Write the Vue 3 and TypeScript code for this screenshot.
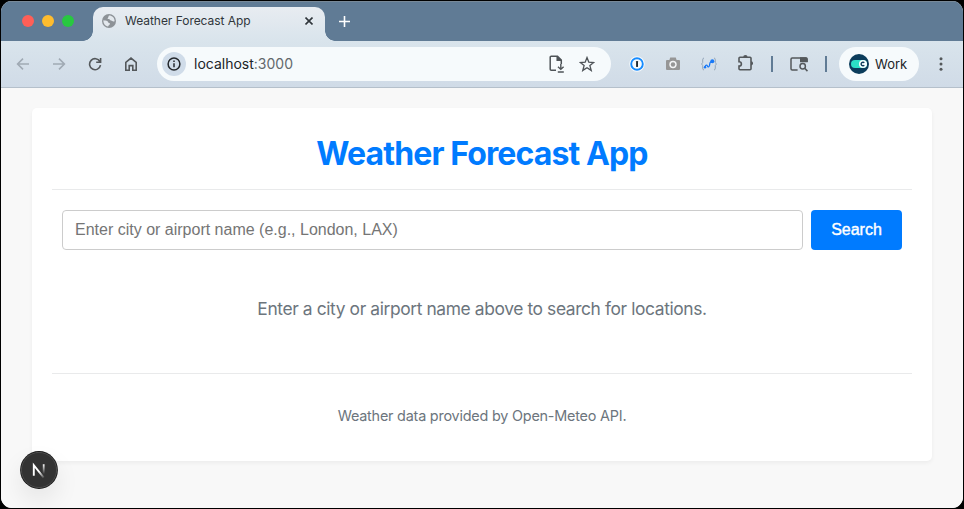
<script setup lang="ts">
import { ref } from 'vue'

const query = ref<string>('')
const lights: string[] = ['red', 'yellow', 'green']
</script>

<template>
  <div class="desktop">
    <div class="window">
      <div class="tabstrip">
        <div class="lights">
          <span v-for="c in lights" :key="c" class="light" :class="c"></span>
        </div>
        <div class="tab">
          <svg class="globe" width="14" height="14" viewBox="0 0 14 14">
            <circle cx="7" cy="7" r="7" fill="#8d9297" />
            <path d="M1.400 6.200C2.800 6.500 4.200 6.300 5.500 7.200c1 .6.3 1.600 1.600 1.900 1.100.3 1.200 1 .3 1.600-.8.5-.9 1.100-1.300 1.700C3.200 12 1.200 9.500 1.400 6.200z" fill="#e3e8ed" />
            <path d="M7 1.500c-.9 1-.2 1.500-1 2.300-.8.700-.3 1.300.8 1.300 1.200 0 1 1.300 2.200 1.500 1.200.2 1.300 1 2.400 1 .7 0 1-.3 1.200-.7C12.400 3.900 10.500 1.500 7 1.500z" fill="#e3e8ed" />
          </svg>
          <span class="tab-title">Weather Forecast App</span>
          <svg class="close" width="8" height="8" viewBox="0 0 8 8"><path d="M.5.5l7 7M7.500.5l-7 7" stroke="#30363b" stroke-width="1.600" /></svg>
        </div>
        <svg class="plus" width="11" height="11" viewBox="0 0 11 11"><path d="M5.500 0v11M0 5.500h11" stroke="#fff" stroke-width="1.600" /></svg>
      </div>

      <div class="toolbar">
        <div class="nav">
          <svg width="14" height="14" viewBox="0 0 14 14" class="line dim"><path d="M13 7H1.800M7 1.600L1.600 7 7 12.400" /></svg>
          <svg width="14" height="14" viewBox="0 0 14 14" class="line dim"><path d="M1 7h11.200M7 1.600L12.400 7 7 12.400" /></svg>
          <svg width="14" height="14" viewBox="0 0 14 14" class="line"><path d="M11.900 4.500A5.500 5.500 0 1 0 12.500 8.200M12.600 1v4.300H8.200" /></svg>
          <svg width="14" height="14" viewBox="0 0 14 14" class="line"><path d="M1.800 13.200V5.300L7 1.100l5.200 4.200v7.900H8.800V8.600H5.200v4.600z" /></svg>
        </div>
        <div class="omnibox">
          <span class="site-info">
            <svg width="14" height="14" viewBox="0 0 14 14"><circle cx="7" cy="7" r="5.900" fill="none" stroke="#24282c" stroke-width="1.500" /><path d="M7 6.200v4M7 3.500v1.500" stroke="#24282c" stroke-width="1.500" /></svg>
          </span>
          <span class="url">localhost<span class="port">:3000</span></span>
          <svg class="save" width="16" height="18" viewBox="0 0 16 18"><path d="M7 15.200H2.200a1 1 0 0 1-1-1V2.200a1 1 0 0 1 1-1h6.300L12.300 5v4M8.200 1.200v4.100h4.100" fill="none" stroke="#4f5458" stroke-width="1.500" /><path d="M8.200 1l4.300 4.300H8.200z" fill="#4f5458" /><path d="M11.800 9v5M9 11.700l2.800 2.700 2.800-2.700M8.800 17h6" fill="none" stroke="#4f5458" stroke-width="1.400" /></svg>
          <svg class="star" width="16" height="16" viewBox="0 0 16 16"><path d="M8 1.600l1.800 4.600 4.900.3-3.800 3.100 1.300 4.800L8 11.700l-4.200 2.700 1.300-4.800-3.800-3.100 4.900-.3z" fill="none" stroke="#4f5458" stroke-width="1.350" /></svg>
        </div>
        <svg class="onepass" width="16" height="16" viewBox="0 0 16 16"><circle cx="8" cy="8" r="7.700" fill="#f8fbfd" /><circle cx="8" cy="8" r="5.800" fill="none" stroke="#168bff" stroke-width="1.900" /><rect x="7.100" y="5" width="1.900" height="6" rx=".4" fill="#202b34" /></svg>
        <svg class="camera" width="16" height="14" viewBox="0 0 16 14"><path d="M5.200.6h5.600l.8 2.400H14q1 0 1 1v8q0 1-1 1H2q-1 0-1-1V4q0-1 1-1h2.400z" fill="#969696" /><circle cx="8" cy="7.500" r="3.700" fill="#f3f4f5" /><circle cx="8" cy="7.500" r="2.200" fill="#969696" /></svg>
        <svg class="curve" width="16" height="14" viewBox="0 0 16 14"><path d="M3 1Q1.700 1 1.700 3v2.500L.6 7l1.100 1.500V11Q1.700 13 3 13M13 1q1.300 0 1.300 2v2.500L15.400 7l-1.100 1.500V11q0 2-1.300 2" fill="none" stroke="#8da0b4" stroke-width=".9" /><path d="M4 10C4.800 7.500 6 8 6.500 9.300S8.600 10 8.700 7.300 9.500 5.300 11 4.700" fill="none" stroke="#1879f8" stroke-width="1.300" /><circle cx="4" cy="10.300" r="1.200" fill="#1879f8" /><circle cx="11.300" cy="4.300" r="2" fill="#1879f8" /></svg>
        <svg class="puzzle" width="18" height="18" viewBox="0 0 18 18"><path d="M14 4.300q0-1-1-1H3q-1 0-1 1v3.500c3.200 0 3.200 4.200 0 4.200v2.700q0 1 1 1h10q1 0 1-1z" fill="none" stroke="#54585b" stroke-width="1.600" /><path d="M6.200 3.300a2.200 2.200 0 0 1 4.400 0zM14 7.200a2.100 2.100 0 0 1 0 4.200z" fill="#54585b" /></svg>
        <span class="divider first"></span>
        <svg class="tabsearch" width="18" height="16" viewBox="0 0 18 16"><path d="M7.600 14H2.200Q1 14 1 12.800V3.200Q1 2 2.200 2h13.600Q17 2 17 3.200V6" fill="none" stroke="#54585b" stroke-width="1.500" /><path d="M10 1.300h6q1.700 0 1.700 1.700v3.200H10z" fill="#54585b" /><circle cx="12.700" cy="10.300" r="2.700" fill="none" stroke="#54585b" stroke-width="1.500" /><path d="M14.700 12.300l2.800 2.800" stroke="#54585b" stroke-width="1.600" /></svg>
        <span class="divider second"></span>
        <div class="profile">
          <svg width="20" height="20" viewBox="0 0 20 20"><circle cx="10" cy="10" r="10" fill="#0b3c5b" /><rect x="2" y="6" width="16" height="8" rx="4" fill="#2ce0c6" /><circle cx="14" cy="10" r="4" fill="#f6ffff" /><path d="M15.300 8.800a1.800 1.800 0 1 0 0 2.400" fill="none" stroke="#0b3c5b" stroke-width="1.400" /></svg>
          <span>Work</span>
        </div>
        <svg class="menu" width="4" height="14" viewBox="0 0 4 14" fill="#54585b"><circle cx="2" cy="1.700" r="1.500" /><circle cx="2" cy="7" r="1.500" /><circle cx="2" cy="12.300" r="1.500" /></svg>
      </div>

      <main class="page">
        <section class="card">
          <header class="card-head"><h1>Weather Forecast App</h1></header>
          <form class="search" @submit.prevent>
            <input v-model="query" type="text" placeholder="Enter city or airport name (e.g., London, LAX)" />
            <button type="submit">Search</button>
          </form>
          <p class="hint"><span>Enter a city or airport name above to search for locations.</span></p>
          <footer class="card-foot"><span>Weather data provided by Open-Meteo API.</span></footer>
        </section>
        <div class="dev-badge">
          <svg width="38" height="38" viewBox="0 0 38 38">
            <defs>
              <linearGradient id="diag" x1="20" y1="20" x2="25" y2="27" gradientUnits="userSpaceOnUse"><stop stop-color="#fff" /><stop offset="1" stop-color="#fff" stop-opacity="0" /></linearGradient>
              <linearGradient id="stem" x1="0" y1="13" x2="0" y2="23" gradientUnits="userSpaceOnUse"><stop stop-color="#fff" /><stop offset="1" stop-color="#fff" stop-opacity="0" /></linearGradient>
            </defs>
            <circle cx="19" cy="19" r="18.900" fill="#171717" />
            <circle cx="19" cy="19" r="17.600" fill="#333" stroke="#535353" stroke-width=".9" />
            <path d="M13.800 24.800V14.200l9.900 12.500" fill="none" stroke="url(#diag)" stroke-width="1.900" />
            <path d="M23.700 13.300v10" fill="none" stroke="url(#stem)" stroke-width="1.800" />
          </svg>
        </div>
      </main>
    </div>
  </div>
</template>

<style>
body { background: #000; overflow: hidden; }
</style>

<style scoped>
* { box-sizing: border-box; }
svg { display: block; flex: none; }
.desktop { width: 964px; height: 509px; padding: 1px; background: #000; font-family: Inter, "Liberation Sans", sans-serif; }
.window { height: 507px; display: flex; flex-direction: column; overflow: hidden; border-radius: 11px; background: #f8f8f8; }
.tabstrip { height: 40px; flex: none; display: flex; background: #607b95; border-top: 1px solid #788998; }
.lights { display: flex; gap: 8px; padding: 13px 0 0 21px; width: 92px; }
.light { width: 12px; height: 12px; border-radius: 50%; }
.red { background: #ff5f57; }
.yellow { background: #febc2e; }
.green { background: #28c840; }
.tab { position: relative; width: 232px; height: 34px; margin-top: 5px; border-radius: 10px 10px 0 0; background: linear-gradient(#e8ecf1, #d9e4ec); display: flex; align-items: center; padding: 0 12px 7px 9px; }
.tab::before, .tab::after { content: ""; position: absolute; bottom: 0; width: 10px; height: 10px; }
.tab::before { left: -10px; background: radial-gradient(circle at 0 0, transparent 9.500px, #d9e4ec 10px); }
.tab::after { right: -10px; background: radial-gradient(circle at 100% 0, transparent 9.500px, #d9e4ec 10px); }
.tab-title { margin-left: 9px; flex: 1; white-space: nowrap; font-size: 12px; line-height: 16px; letter-spacing: -.04px; color: #30363b; }
.plus { margin: 14px 0 0 14px; }
.toolbar { height: 47px; flex: none; display: flex; align-items: center; background: linear-gradient(#d9e4ec, #d0dbe7); border-bottom: 1px solid #b5c0cb; }
.nav { display: flex; gap: 22px; width: 156px; padding-left: 15px; }
.line { fill: none; stroke: #54585b; stroke-width: 1.600; }
.dim { stroke: #a0aab4; }
.omnibox { width: 454px; height: 34px; display: flex; align-items: center; border-radius: 17px; background: #f6fafc; padding-left: 5px; }
.site-info { width: 24px; height: 24px; display: grid; place-items: center; border-radius: 50%; background: #d0dce9; }
.url { margin-left: 8px; width: 355px; font-size: 14px; line-height: 20px; color: #202427; }
.port { color: #62686c; }
.star { margin-left: 14px; }
.onepass { margin-left: 18px; }
.camera { margin-left: 20px; }
.curve { margin-left: 20px; }
.puzzle { margin-left: 20px; margin-top: -2px; }
.divider { width: 2px; height: 16px; background: #607b95; }
.first { margin-left: 16px; }
.tabsearch { margin-left: 17px; }
.second { margin-left: 17px; }
.profile { margin-left: 12px; width: 80px; height: 34px; border-radius: 17px; background: #f6fafc; display: flex; align-items: center; gap: 6px; padding-left: 10px; font-size: 13px; color: #202427; }
.menu { margin-left: 20px; }
.page { position: relative; flex: 1; padding: 20px 31px; background: #f8f8f8; }
.card { height: 353px; padding: 20px; display: flex; flex-direction: column; background: #fff; border-radius: 5px; box-shadow: 0 2px 4px rgba(0, 0, 0, .05); }
.card-head { height: 62px; flex: none; border-bottom: 1px solid #e9eaeb; text-align: center; }
h1 { margin: 6px 0 0; font-size: 32px; line-height: 40px; font-weight: 700; letter-spacing: -.88px; color: #007bff; white-space: nowrap; }
.search { display: flex; gap: 8px; padding: 20px 10px 0; height: 60px; }
input { width: 741px; height: 40px; border: 1px solid #ccc; border-radius: 4px; padding: 0 12px 1px; font: 16px "Liberation Sans", Arial, sans-serif; background: #fff; outline: none; color: #333; }
input::placeholder { color: #757575; opacity: 1; }
button { flex: 1; height: 40px; padding: 0 0 1px; border: 0; border-radius: 4px; background: #007bff; color: #fff; font: 16px "Liberation Sans", Arial, sans-serif; -webkit-text-stroke: .4px #fff; }
.hint { margin: 48px 0 0; text-align: center; font-size: 17.400px; line-height: 22px; letter-spacing: -.39px; color: #6c757d; }
.card-foot { margin-top: 53px; padding-top: 32px; border-top: 1px solid #e9eaeb; text-align: center; font-size: 14.400px; line-height: 20px; letter-spacing: -.21px; color: #6c757d; }
.dev-badge { position: absolute; left: 19px; top: 363px; width: 38px; height: 38px; border-radius: 50%; box-shadow: 0 12px 24px rgba(0, 0, 0, .08); }
</style>
